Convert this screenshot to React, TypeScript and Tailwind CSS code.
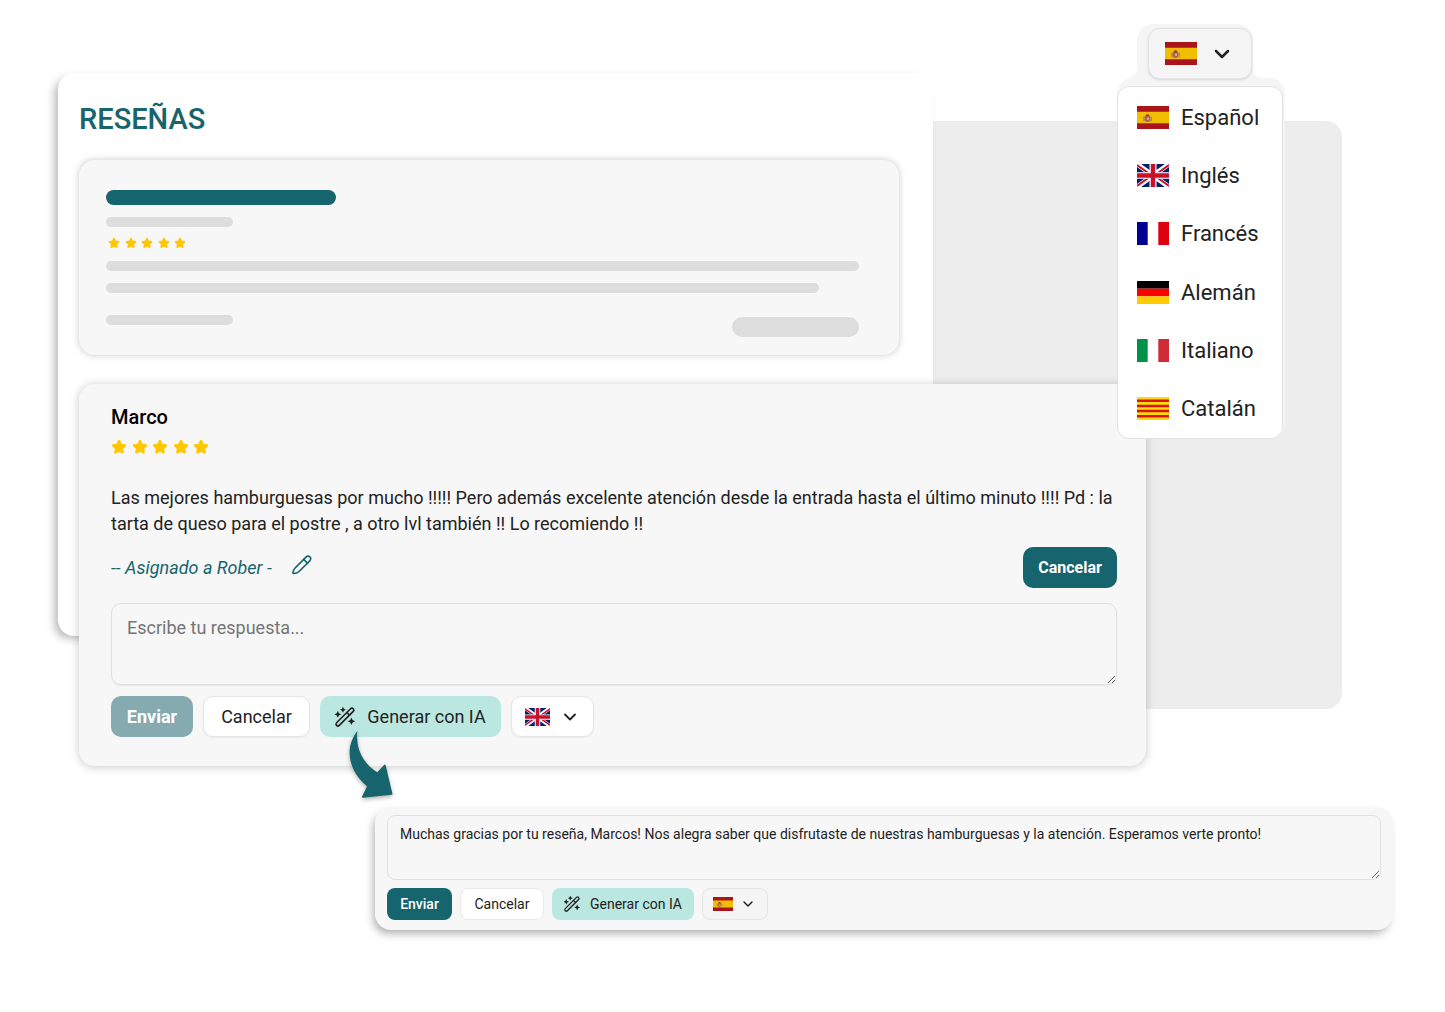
import type { ReactNode } from "react";
import { ChevronDown } from "lucide-react";

type Country = "es" | "gb" | "fr" | "de" | "it" | "ca";

function Flag({ country, className }: { country: Country; className: string }) {
  return (
    <svg viewBox="0 0 32 24" preserveAspectRatio="none" className={className} aria-hidden="true">
      {country === "es" && (
        <>
          <path fill="#aa151b" d="M0 0h32v24H0z" />
          <path fill="#f1bf00" d="M0 6h32v12H0z" />
          <ellipse cx="10.5" cy="13" rx="4.600" ry="3.400" fill="#cf9a3c" />
          <ellipse cx="10.500" cy="13" rx="2.800" ry="3.500" fill="#b5603f" />
          <path fill="#a08a70" d="M6.200 11.500h1.200v4.500H6.200zM13.600 11.500h1.200v4.500h-1.200z" />
          <path fill="#ad1519" d="M9.200 8.800h2.600v1.600H9.200z" />
          <circle cx="11" cy="13.400" r="1.300" fill="#c9a8a8" />
        </>
      )}
      {country === "gb" && (
        <>
          <path fill="#012169" d="M0 0h32v24H0z" />
          <path stroke="#fff" strokeWidth="5" d="M0 0l32 24M32 0L0 24" />
          <path stroke="#c8102e" strokeWidth="2" d="M0 1l14 10.500M18 12.500L32 23M32 1L18 11.500M14 12.500L0 23" />
          <path stroke="#fff" strokeWidth="7" d="M16 0v24M0 12h32" />
          <path stroke="#c8102e" strokeWidth="4.500" d="M16 0v24M0 12h32" />
        </>
      )}
      {country === "fr" && (
        <>
          <path fill="#fff" d="M0 0h32v24H0z" />
          <path fill="#000091" d="M0 0h10.700v24H0z" />
          <path fill="#e1000f" d="M21.300 0H32v24H21.300z" />
        </>
      )}
      {country === "de" && (
        <>
          <path fill="#000" d="M0 0h32v8H0z" />
          <path fill="#f00" d="M0 8h32v8H0z" />
          <path fill="#fc0" d="M0 16h32v8H0z" />
        </>
      )}
      {country === "it" && (
        <>
          <path fill="#fff" d="M0 0h32v24H0z" />
          <path fill="#009246" d="M0 0h10.700v24H0z" />
          <path fill="#ce2b37" d="M21.300 0H32v24H21.300z" />
        </>
      )}
      {country === "ca" && (
        <>
          <path fill="#fcdd09" d="M0 0h32v24H0z" />
          <path stroke="#da121a" strokeWidth="2.670" d="M0 4h32M0 9.330h32M0 14.670h32M0 20h32" />
        </>
      )}
    </svg>
  );
}

function Stars({ className, star }: { className: string; star: string }) {
  return (
    <div role="img" aria-label="5 de 5 estrellas" className={`flex justify-between ${className}`}>
      {[1, 2, 3, 4, 5].map((n) => (
        <svg key={n} viewBox="0 0 24 24" className={star} fill="#ffc700" stroke="#ffc700" strokeWidth="3.500" strokeLinejoin="round">
          <path d="M12 3l2.700 5.700 6.300.9-4.600 4.400 1.100 6.200-5.500-2.900-5.500 2.900 1.100-6.200L3 9.600l6.300-.9z" />
        </svg>
      ))}
    </div>
  );
}

function WandIcon({ className }: { className: string }) {
  return (
    <svg viewBox="0 0 24 24" className={className} fill="none" stroke="currentColor" strokeWidth="2" strokeLinecap="round" strokeLinejoin="round" aria-hidden="true">
      <path d="M1.900 22.100a2.300 2.300 0 0 1 0-3.200L18.700 2.100a2.300 2.300 0 0 1 3.200 0 2.300 2.300 0 0 1 0 3.200L5.100 22.100a2.300 2.300 0 0 1-3.200 0z" />
      <path d="M14.200 6.600l3.200 3.200" />
      <path fill="currentColor" stroke="none" d="M9.500-.4l1.200 2.400 2.400 1.200-2.400 1.200-1.200 2.400-1.200-2.400L5.900 3.200 8.300 2zM3.400 4.600l1.300 2.900 2.900 1.300-2.900 1.300L3.400 13l-1.300-2.900L-.8 8.800l2.900-1.300zM19.700 12.600l1.400 3.100 3.100 1.400-3.100 1.400-1.400 3.100-1.400-3.100-3.100-1.400 3.100-1.400z" />
    </svg>
  );
}

function PencilIcon() {
  return (
    <svg viewBox="0 0 24 24" className="size-5" fill="none" stroke="currentColor" strokeWidth="2" strokeLinecap="round" strokeLinejoin="round" aria-hidden="true">
      <path d="M2 22.200c-.6 0-.9-.4-.8-.9.200-2.300.8-4 2.500-5.700L16.800 2.500c1.500-1.500 3.400-1.500 4.700-.2s1.300 3.200-.2 4.700L8.100 20.100c-1.700 1.600-3.600 2-6.100 2.100z" />
      <path d="M14 5.300l4.600 4.600" />
    </svg>
  );
}

function ArrowShape() {
  return (
    <svg viewBox="0 0 141 219" className="absolute -bottom-9 left-[269px] w-[47px] drop-shadow-[0_2px_2px_rgba(0,0,0,0.3)]" aria-hidden="true">
      <path fill="#16646d" d="M28 5C12 28 4 48 5 74c1 36 19 69 52 98-4 9-9 19-15 31q-1 3 3 3l86-9q3 0 2-4l-20-84q-2-5-5-1L88 130C50 106 22 66 28 5z" />
    </svg>
  );
}

function Bar({ className }: { className: string }) {
  return <div className={`rounded-full ${className}`} />;
}

const large = "h-[41px] rounded-[10px] text-lg";
const small = "h-8 rounded-lg text-sm";

function Button({ className, children }: { className: string; children: ReactNode }) {
  return (
    <button type="button" className={`flex shrink-0 items-center justify-center whitespace-nowrap ${className}`}>
      {children}
    </button>
  );
}

const languages: [Country, string][] = [
  ["es", "Español"],
  ["gb", "Inglés"],
  ["fr", "Francés"],
  ["de", "Alemán"],
  ["it", "Italiano"],
  ["ca", "Catalán"],
];

function LanguageMenu() {
  return (
    <div className="absolute top-6 right-[160px] w-[168px]">
      <div className="flex items-end">
        <svg viewBox="0 0 10 10" className="ml-2.5 size-2.5" fill="#f5f5f5" aria-hidden="true">
          <path d="M10 0v10H0C6 10 10 6 10 0z" />
        </svg>
        <div className="h-[54px] w-[116px] rounded-t-2xl bg-[#f5f5f5] pt-1 pl-[11px]">
          <button
            type="button"
            aria-label="Idioma: Español"
            aria-haspopup="listbox"
            aria-expanded="true"
            className="relative flex h-[51px] w-[104px] items-center justify-between rounded-xl border border-[#e4e4e4] bg-[#f5f5f5] pr-[17px] pl-4 shadow-sm"
          >
            <Flag country="es" className="h-[23px] w-8" />
            <ChevronDown className="size-6 text-[#222]" strokeWidth={2.5} />
          </button>
        </div>
        <svg viewBox="0 0 10 10" className="size-2.5" fill="#f5f5f5" aria-hidden="true">
          <path d="M0 0v10h10C4 10 0 6 0 0z" />
        </svg>
      </div>
      <div className="rounded-2xl bg-[#f5f5f5] pt-2 pr-0.5">
        <ul role="listbox" aria-label="Idioma" className="grid h-[353px] grid-rows-6 rounded-xl border border-[#e2e2e2] bg-white pt-px">
          {languages.map(([country, name]) => (
            <li key={country} role="option" aria-selected={country === "es"} className="flex">
              <button type="button" className="flex w-full items-center gap-3 pl-[19px] text-[22px] text-[#222]">
                <Flag country={country} className="h-[23px] w-8" />
                {name}
              </button>
            </li>
          ))}
        </ul>
      </div>
    </div>
  );
}

export default function App() {
  return (
    <main className="relative min-h-screen overflow-x-hidden bg-white pt-[73px] pb-16 font-['Roboto',sans-serif] text-[#222]">
      <div className="absolute top-[121px] right-[103px] left-1/2 h-[588px] rounded-2xl bg-[#ededed]" />

      <section className="relative mr-[512px] ml-[58px] rounded-2xl bg-white pt-7 pr-[34px] pb-[281px] pl-[21px] shadow-[-5px_4px_10px_-2px_rgba(0,0,0,0.3)]">
        <h1 className="text-[29px] leading-9 font-medium text-[#16646d]">RESEÑAS</h1>
        <div className="mt-[23px] rounded-2xl bg-[#f7f7f7] pt-[30px] pr-10 pb-[18px] pl-[27px] shadow-[0_0_6px_1px_rgba(0,0,0,0.17)]">
          <Bar className="h-[15px] w-[230px] bg-[#16646d]" />
          <Bar className="mt-3 h-2.5 w-[127px] bg-[#ddd]" />
          <Stars className="mt-[10px] ml-0.5 w-[78px]" star="size-3" />
          <Bar className="mt-3 h-2.5 bg-[#ddd]" />
          <Bar className="mt-3 mr-10 h-2.5 bg-[#ddd]" />
          <div className="mt-[22px] flex h-[22px] justify-between">
            <Bar className="h-2.5 w-[127px] bg-[#ddd]" />
            <Bar className="h-5 w-[127px] self-end bg-[#ddd]" />
          </div>
        </div>
      </section>

      <section className="relative -mt-[252px] mr-[299px] ml-[79px] rounded-2xl bg-[#f7f7f7] pt-[21px] pr-[29px] pb-[29px] pl-8 shadow-[0_1px_8px_1px_rgba(0,0,0,0.18)]">
        <h2 className="text-xl leading-6 font-medium text-black">Marco</h2>
        <Stars className="mt-[10px] w-[98px]" star="size-4" />
        <p className="mt-[30px] text-lg leading-[26px]">
          Las mejores hamburguesas por mucho !!!!! Pero además excelente atención desde la entrada hasta el último minuto !!!! Pd : la
          tarta de queso para el postre , a otro lvl también !! Lo recomiendo !!
        </p>
        <div className="mt-[10px] flex items-center gap-5 text-[#16646d]">
          <span className="text-lg italic">-- Asignado a Rober -</span>
          <button type="button" aria-label="Editar asignación" className="pb-1.5">
            <PencilIcon />
          </button>
          <Button className="ml-auto h-[41px] w-[94px] rounded-[10px] bg-[#16646d] text-base font-bold text-white">Cancelar</Button>
        </div>
        <textarea
          aria-label="Respuesta"
          placeholder="Escribe tu respuesta..."
          className="mt-[15px] block h-[82px] w-full resize-y rounded-[10px] border border-[#e0e0e0] bg-transparent px-[15px] pt-[11px] text-lg leading-[26px] shadow-[0_1px_2px_rgba(0,0,0,0.06)] placeholder:text-[#757575]"
        />
        <div className="mt-[11px] flex gap-[10px]">
          <Button className={`${large} w-[82px] bg-[#85abb0] font-bold text-white`}>Enviar</Button>
          <Button className={`${large} w-[107px] border border-[#e5e5e5] bg-white shadow-xs`}>Cancelar</Button>
          <Button className={`${large} w-[181px] gap-3 bg-[#bbe7e1]`}>
            <WandIcon className="size-5 overflow-visible" />
            Generar con IA
          </Button>
          <button type="button" aria-label="Idioma: Inglés" aria-haspopup="listbox" className="flex h-[41px] w-[83px] items-center justify-between rounded-[10px] border border-[#e5e5e5] bg-white pr-[13px] pl-[13px] shadow-xs">
            <Flag country="gb" className="h-[18px] w-[25px]" />
            <ChevronDown className="size-5" strokeWidth={2.2} />
          </button>
        </div>
        <ArrowShape />
      </section>

      <section className="mt-[41px] mr-[52px] ml-[375px] rounded-2xl bg-[#f7f7f7] px-3 pt-2 pb-[10px] shadow-[-3px_5px_10px_-2px_rgba(0,0,0,0.35)]">
        <textarea
          aria-label="Respuesta generada"
          defaultValue="Muchas gracias por tu reseña, Marcos! Nos alegra saber que disfrutaste de nuestras hamburguesas y la atención. Esperamos verte pronto!"
          className="block h-[65px] w-full resize-y rounded-lg border border-[#e0e0e0] bg-transparent px-3 pt-2 text-sm leading-5"
        />
        <div className="mt-2 flex gap-2">
          <Button className={`${small} w-[65px] bg-[#16646d] font-medium text-white`}>Enviar</Button>
          <Button className={`${small} w-[84px] border border-[#e9e9e9] bg-white`}>Cancelar</Button>
          <Button className={`${small} w-[142px] gap-[10px] bg-[#bbe7e1]`}>
            <WandIcon className="size-4 overflow-visible" />
            Generar con IA
          </Button>
          <button type="button" aria-label="Idioma: Español" aria-haspopup="listbox" className="flex h-8 w-[66px] items-center justify-between rounded-lg border border-[#e5e5e5] bg-[#f5f5f5] pr-[11px] pl-[10px]">
            <Flag country="es" className="h-[14px] w-5" />
            <ChevronDown className="size-4" strokeWidth={2.2} />
          </button>
        </div>
      </section>

      <LanguageMenu />
    </main>
  );
}
